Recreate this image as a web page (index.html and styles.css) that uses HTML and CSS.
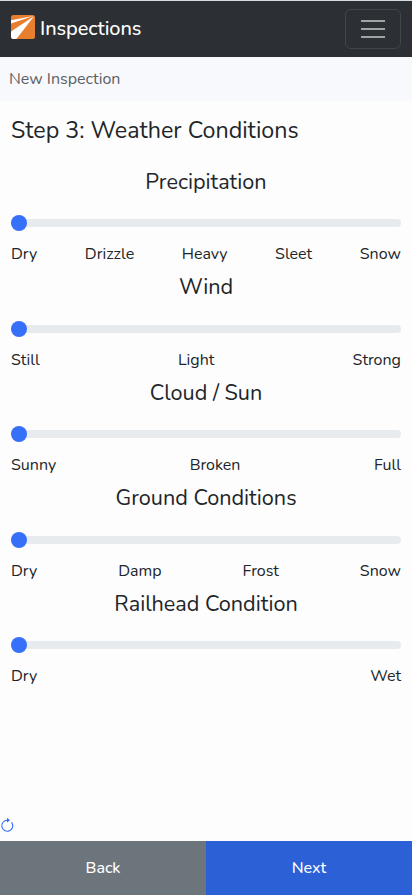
FILE: index.html
```html
<!DOCTYPE html>
<html lang="en">
<head>
<meta charset="utf-8">
<meta name="viewport" content="width=device-width, initial-scale=1">
<title>Inspections</title>
<link rel="stylesheet" href="styles.css">
</head>
<body>
<header class="navbar">
  <a class="brand">
    <svg class="logo" width="24" height="24" viewBox="0 0 24 24" aria-hidden="true">
      <rect width="24" height="24" rx="2.5" fill="#e87f2f"/>
      <path d="M0 5.2 22.5 .9 0 8.4Z" fill="#fff"/>
      <path d="M0 16.4 23 1.2 5.4 24H2.5Q0 24 0 21.5Z" fill="#fff"/>
    </svg>
    <span class="brand-name">Inspections</span>
  </a>
  <button class="toggler" aria-label="Menu">
    <svg width="30" height="30" viewBox="0 0 30 30"><path d="M3 7h24M3 15h24M3 23h24" stroke="#a0a3a5" stroke-width="2"/></svg>
  </button>
</header>
<div class="subbar">New Inspection</div>
<main class="content">
  <h1 class="step">Step 3: Weather Conditions</h1>
  <section class="field">
    <h2 class="field-title">Precipitation</h2>
    <div class="range"><div class="track"></div><div class="thumb"></div></div>
    <div class="labels"><span>Dry</span><span>Drizzle</span><span>Heavy</span><span>Sleet</span><span>Snow</span></div>
  </section>
  <section class="field">
    <h2 class="field-title">Wind</h2>
    <div class="range"><div class="track"></div><div class="thumb"></div></div>
    <div class="labels"><span>Still</span><span>Light</span><span>Strong</span></div>
  </section>
  <section class="field">
    <h2 class="field-title">Cloud / Sun</h2>
    <div class="range"><div class="track"></div><div class="thumb"></div></div>
    <div class="labels"><span>Sunny</span><span>Broken</span><span>Full</span></div>
  </section>
  <section class="field">
    <h2 class="field-title">Ground Conditions</h2>
    <div class="range"><div class="track"></div><div class="thumb"></div></div>
    <div class="labels"><span>Dry</span><span>Damp</span><span>Frost</span><span>Snow</span></div>
  </section>
  <section class="field">
    <h2 class="field-title">Railhead Condition</h2>
    <div class="range"><div class="track"></div><div class="thumb"></div></div>
    <div class="labels"><span>Dry</span><span>Wet</span></div>
  </section>
</main>
<div class="status">
  <svg width="14" height="16" viewBox="0 0 14 16" fill="none" aria-hidden="true">
    <path d="M7.2 3.2A5.5 5.5 0 1 0 11.8 5.6" stroke="#3670f8" stroke-width="1.1" stroke-linecap="round"/>
    <path d="M7 .8 10 3.2 7 5.6Z" fill="#3670f8"/>
  </svg>
</div>
<footer class="actions">
  <button class="action back">Back</button>
  <button class="action next">Next</button>
</footer>
</body>
</html>
```
FILE: styles.css
```css
* { box-sizing: border-box; }
body {
  margin: 0;
  height: 895px;
  display: flex;
  flex-direction: column;
  background: #fdfdfd;
  color: #212529;
  font-family: Nunito, Lato, sans-serif;
  font-size: 16px;
  line-height: 24px;
}
button { font: inherit; border: 0; padding: 0; }
.navbar {
  height: 57px;
  border-top: 1px solid #d5dce2;
  background: #2c3035;
  padding: 0 11px;
  display: flex;
  align-items: center;
  justify-content: space-between;
}
.brand { display: flex; align-items: center; gap: 5px; color: #fff; font-size: 20px; }
.logo { display: block; margin-bottom: 4px; }
.brand-name { font-weight: 500; letter-spacing: -.1px; }
.toggler {
  width: 56px;
  height: 40px;
  border: 1px solid #424649;
  border-radius: 6px;
  background: none;
  display: flex;
  align-items: center;
  justify-content: center;
}
.subbar {
  height: 44px;
  padding: 10px 9px;
  background: #f8f9fc;
  color: #5c6064;
}
.content { padding: 15px 11px 0; flex: 1; }
.step { margin: 0 0 23.5px; font-size: calc(1.3rem + .6vw); line-height: 29px; font-weight: 400; }
.field { height: 105.5px; }
.field-title { margin: 0; font-size: calc(1.275rem + .3vw); line-height: 27px; font-weight: 400; text-align: center; }
.range { position: relative; height: 24px; margin: 15.5px 0 7px; display: flex; align-items: center; }
.track { flex: 1; height: 8px; border-radius: 4px; background: #e7ebee; }
.thumb { position: absolute; left: 0; top: 4px; width: 16px; height: 16px; border-radius: 50%; background: #3670f8; }
.labels { display: flex; justify-content: space-between; }
.status { height: 24px; }
.status svg { display: block; }
.actions { height: 54px; display: flex; }
.action { flex: 1; color: #fff; font-weight: 500; }
.back { background: #6d757c; }
.next { background: #2b60d6; }
```
